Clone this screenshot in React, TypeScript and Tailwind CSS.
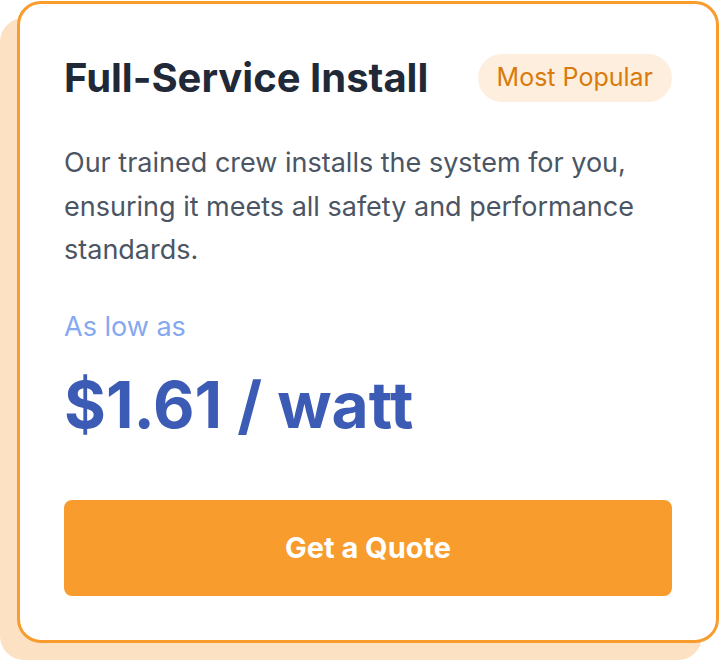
import { FC } from 'react'

const PricingCard: FC = (): JSX.Element => {
  return (
    <div className="w-[702px] rounded-[24px] border-[3px] border-[#f89c2e] bg-white p-[44px] shadow-[-17px_17px_0_#fde1c3]">
      <div className="flex items-center justify-between">
        <h2 className="text-[40px] font-bold leading-[60px] text-[#1f2937]">Full-Service Install</h2>
        <span className="flex h-[48px] items-center rounded-full bg-[#feeedd] px-[19px] text-[25px] text-[#d97a0a]">
          Most Popular
        </span>
      </div>

      <p className="mt-[33px] text-[27px] leading-[43.5px] text-[#4b5563]">
        Our trained crew installs the system for you, ensuring it meets all safety and performance standards.
      </p>

      <p className="mt-[37px] text-[27px] leading-[36px] text-[#86a8f0]">As low as</p>
      <p className="mt-[28px] text-[64px] font-bold leading-[64px] text-[#3b5bb5]">$1.61 / watt</p>

      <button className="mt-[63px] flex h-[96px] w-full items-center justify-center rounded-[8px] bg-[#f89c2e] text-[29px] font-bold text-white">
        Get a Quote
      </button>
    </div>
  )
}

const App: FC = (): JSX.Element => {
  return (
    <div className="min-h-[660px] bg-white pl-[17px] pt-[1px] font-['Inter',sans-serif]">
      <PricingCard />
    </div>
  )
}

export default App
